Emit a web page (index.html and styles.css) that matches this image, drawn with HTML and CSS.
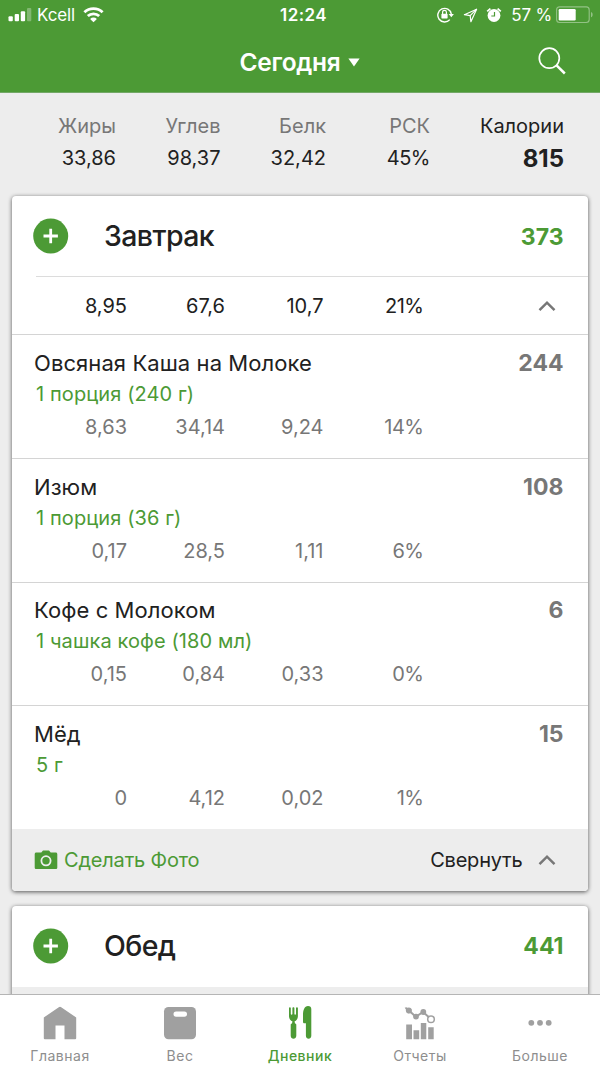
FILE: index.html
```html
<!DOCTYPE html>
<html lang="ru">
<head>
<meta charset="utf-8">
<meta name="viewport" content="width=device-width">
<title>Дневник</title>
<link rel="stylesheet" href="styles.css">
</head>
<body>
<div class="app">
  <header class="top">
    <div class="status">
      <div class="status-left">
        <svg width="24" height="16" viewBox="0 0 24 16" fill="#fff"><rect x="0.5" y="9.3" width="4.3" height="5" rx="1"/><rect x="6.7" y="7" width="4.3" height="7.3" rx="1"/><rect x="12.8" y="4.3" width="4.3" height="10" rx="1"/><rect x="19" y="1" width="4.3" height="13.3" rx="1" opacity=".3"/></svg>
        <span class="carrier">Kcell</span>
        <svg class="wifi" width="21" height="16" viewBox="0 0 21 16" fill="none" stroke="#fff" stroke-width="2.8"><path d="M1.4 5.3a13 13 0 0 1 18.2 0"/><path d="M4.8 9.1a8.2 8.2 0 0 1 11.4 0"/><path d="M10.5 15.2 7.1 11.9a4.9 4.9 0 0 1 6.8 0z" fill="#fff" stroke="none"/></svg>
      </div>
      <time class="clock">12:24</time>
      <div class="status-right">
        <svg width="18" height="16" viewBox="0 0 18 16"><path d="M12.8 12.600A6.800 6.800 0 1 1 14.300 7" fill="none" stroke="#fff" stroke-width="1.4"/><path d="M11.700 7h5.200l-2.600 3.300z" fill="#fff"/><rect x="4.400" y="6.800" width="6.200" height="4.600" rx=".6" fill="#fff"/><path d="M5.600 7V5.300a1.900 1.900 0 0 1 3.800 0V7" fill="none" stroke="#fff" stroke-width="1.200"/></svg>
        <svg class="arrow" width="15" height="15" viewBox="0 0 15 15" fill="none" stroke="#fff" stroke-width="1.200" stroke-linejoin="round"><path d="M13.600 1.200 1.400 6.700l5.800 1 .7 6z"/><path d="M7.200 7.700 13.600 1.200"/></svg>
        <svg class="alarm" width="16" height="16" viewBox="0 0 16 16"><circle cx="8" cy="8.500" r="6.400" fill="#fff"/><path d="M1.200 4.400 4.400 1.600M14.800 4.400l-3.200-2.800" stroke="#fff" stroke-width="1.800"/><path d="M8.500 5v4H5.300" fill="none" stroke="#4c9a35" stroke-width="1.200"/></svg>
        <span class="percent">57 %</span>
        <svg width="37" height="18" viewBox="0 0 37 18"><rect x=".6" y=".9" width="32.600" height="15.600" rx="3" fill="none" stroke="#fff" stroke-opacity=".4" stroke-width="1.100"/><rect x="2.700" y="3" width="17" height="11.400" rx="1.200" fill="#fff"/><path d="M35 6.100c2.200 1 2.200 4.200 0 5.200z" fill="#fff" opacity=".4"/></svg>
      </div>
    </div>
    <div class="titlebar">
      <div class="day">
        <h1>Сегодня</h1>
        <svg width="12" height="9" viewBox="0 0 12 9"><path d="M.4.5h11.200L6 8.500z" fill="#fff"/></svg>
      </div>
      <svg class="search" width="30" height="30" viewBox="0 0 30 30" fill="none" stroke="#fff"><circle cx="12.300" cy="12.200" r="10" stroke-width="1.700"/><path d="m19.300 19.200 8.500 8.300" stroke-width="2.500"/></svg>
    </div>
  </header>

  <section class="summary">
    <div><span class="label">Жиры</span><span>33,86</span></div>
    <div><span class="label">Углев</span><span>98,37</span></div>
    <div><span class="label">Белк</span><span>32,42</span></div>
    <div><span class="label">РСК</span><span class="share">45%</span></div>
    <div><span class="kcal-label">Калории</span><strong>815</strong></div>
  </section>

  <main class="meals">
    <section class="card">
      <div class="meal-head">
        <svg width="36" height="36" viewBox="0 0 36 36"><circle cx="17.700" cy="18" r="17.500" fill="#4c9a35"/><path d="M17.700 10.800v14.400M10.500 18h14.400" stroke="#fff" stroke-width="2.800"/></svg>
        <h2>Завтрак</h2><span class="meal-kcal">373</span>
      </div>
      <div class="totals nums"><span>8,95</span><span>67,6</span><span>10,7</span><span class="share">21%</span>
        <svg class="chev" width="18" height="12" viewBox="0 0 18 12"><path d="m1.500 10.200 7.500-7.500 7.500 7.500" fill="none" stroke="#777" stroke-width="2.500"/></svg>
      </div>
      <article class="item">
        <div class="item-head"><h3>Овсяная Каша на Молоке</h3><b>244</b></div>
        <p>1 порция (240 г)</p>
        <div class="nums"><span>8,63</span><span>34,14</span><span>9,24</span><span class="share">14%</span></div>
      </article>
      <article class="item">
        <div class="item-head"><h3>Изюм</h3><b>108</b></div>
        <p>1 порция (36 г)</p>
        <div class="nums"><span>0,17</span><span>28,5</span><span>1,11</span><span class="share">6%</span></div>
      </article>
      <article class="item">
        <div class="item-head"><h3>Кофе с Молоком</h3><b>6</b></div>
        <p>1 чашка кофе (180 мл)</p>
        <div class="nums"><span>0,15</span><span>0,84</span><span>0,33</span><span class="share">0%</span></div>
      </article>
      <article class="item">
        <div class="item-head"><h3>Мёд</h3><b>15</b></div>
        <p>5 г</p>
        <div class="nums"><span>0</span><span>4,12</span><span>0,02</span><span class="share">1%</span></div>
      </article>
      <footer class="card-foot">
        <svg class="camera" width="24" height="20" viewBox="0 0 24 20"><path d="M2.300 2.600h5L9 .6h6l1.700 2h5c.9 0 1.600.7 1.600 1.600v13.200c0 .9-.7 1.600-1.600 1.600H2.300c-.9 0-1.600-.7-1.600-1.600V4.200c0-.9.7-1.600 1.600-1.600z" fill="#4c9a35"/><circle cx="12" cy="10.800" r="4.600" fill="none" stroke="#eee" stroke-width="1.800"/></svg>
        <span class="photo">Сделать Фото</span>
        <span class="collapse">Свернуть</span>
        <svg width="18" height="12" viewBox="0 0 18 12"><path d="m1.500 10.200 7.500-7.500 7.500 7.500" fill="none" stroke="#777" stroke-width="2.500"/></svg>
      </footer>
    </section>

    <section class="card next">
      <div class="meal-head">
        <svg width="36" height="36" viewBox="0 0 36 36"><circle cx="17.700" cy="18" r="17.500" fill="#4c9a35"/><path d="M17.700 10.800v14.400M10.500 18h14.400" stroke="#fff" stroke-width="2.800"/></svg>
        <h2>Обед</h2><span class="meal-kcal">441</span>
      </div>
      <div class="strip"></div>
    </section>
  </main>

  <nav class="tabs">
    <a class="tab"><svg width="36" height="36" viewBox="0 0 36 36"><path d="M1.800 12.500 16.800 2.200q1.200-.8 2.400 0l15 10.300v20.700q0 1-1 1H22.500V20.500h-9v13.700H2.800q-1 0-1-1z" fill="#a0a0a0"/></svg><span>Главная</span></a>
    <a class="tab"><svg width="36" height="36" viewBox="0 0 36 36"><rect x="2" y="2" width="32" height="32.300" rx="4.500" fill="#a0a0a0"/><rect x="11.500" y="6.500" width="13.500" height="5.200" rx="2.600" fill="#fff"/></svg><span>Вес</span></a>
    <a class="tab active"><svg width="36" height="36" viewBox="0 0 36 36" fill="#4c9a35"><path d="M7 3c0-1 1.800-1 1.800 0v6c0 1 1.600 1 1.600 0V3c0-1 2-1 2 0v6c0 1 1.600 1 1.600 0V3c0-1 1.900-1 1.900 0v8c0 3-1.500 4.700-3.300 5.300l.3 2c1.300.5 1.400 1 1.400 2v10.500c0 3.800-5.600 3.800-5.600 0V20.300c0-1 .2-1.500 1.400-2l.3-2C8.600 15.700 7 14 7 11z"/><path d="M29.300 4v26.800c0 3.800-5.400 3.800-5.400 0V18.300h-1.400c-1 0-1.500-.5-1.500-1.500V10c0-5 1.500-9 5-9 2.200 0 3.300 1 3.300 3z"/></svg><span>Дневник</span></a>
    <a class="tab"><svg width="36" height="36" viewBox="0 0 36 36" fill="#a0a0a0"><path d="M4.200 19.500H10v14.700H4.200zM11.500 25.300h5.700v8.900h-5.700zM18.800 18h5.500v16.200h-5.500zM26.200 22.300h5.500v11.900h-5.500z"/><path d="m4 3 3.500 3 6.300 5.800L21 7l8 7" fill="none" stroke="#a0a0a0" stroke-width="2"/><path d="M2.700 2.300 9.500 4v4L6 8.500z"/><circle cx="6.800" cy="5.400" r="2.900"/><circle cx="14" cy="11.600" r="2.900"/><circle cx="21.300" cy="7" r="2.900"/><circle cx="29" cy="14.300" r="3.300" fill="#fff" stroke="#a0a0a0" stroke-width="1.500"/></svg><span>Отчеты</span></a>
    <a class="tab"><svg width="36" height="36" viewBox="0 0 36 36" fill="#a0a0a0"><circle cx="9.300" cy="17.800" r="2.900"/><circle cx="18" cy="17.800" r="2.900"/><circle cx="26.700" cy="17.800" r="2.900"/></svg><span>Больше</span></a>
  </nav>
</div>
</body>
</html>
```
FILE: styles.css
```css
* { box-sizing: border-box; }
body, h1, h2, h3, p { margin: 0; }
body {
  font-family: Inter, "Noto Sans", sans-serif;
  background: #ededed;
  color: #212121;
}
svg { display: block; flex: none; }

.app {
  width: 600px;
  height: 1066px;
  overflow: hidden;
  display: flex;
  flex-direction: column;
}

.top {
  height: 93px;
  flex: none;
  background: #4c9a35;
  border-bottom: 1px solid #73a867;
  color: #fff;
}
.status {
  height: 30px;
  display: grid;
  grid-template-columns: 1fr auto 1fr;
  align-items: center;
  padding: 0 7px 0 8px;
  font-size: 17px;
  line-height: 30px;
}
.status-left, .status-right { display: flex; align-items: center; }
.status-right { justify-content: flex-end; }
.carrier { margin-left: 5px; letter-spacing: -.1px; }
.wifi { margin-left: 8px; }
.clock { font-weight: 600; letter-spacing: .4px; padding-left: 6px; }
.arrow { margin-left: 8px; }
.alarm { margin-left: 8px; }
.percent { margin: 0 4px 0 9px; letter-spacing: -.2px; }

.titlebar {
  height: 63px;
  display: grid;
  grid-template-columns: 1fr auto 1fr;
  align-items: center;
  padding: 0 33px 0 32px;
}
.day { grid-column: 2; display: flex; align-items: center; gap: 7px; }
.day h1 {
  font-size: 24.500px;
  line-height: 64px;
  font-weight: 600;
  letter-spacing: -.25px;
}
.search { grid-column: 3; justify-self: end; margin-bottom: 2px; }

.summary {
  height: 103px;
  flex: none;
  display: grid;
  grid-template-columns: 116px 104.500px 105.500px 104px 134px;
  padding-top: 17px;
  font-size: 20px;
  line-height: 32px;
  text-align: right;
}
.summary div { display: flex; flex-direction: column; }
.label { color: #777; }
.share { letter-spacing: -.5px; }
.summary strong { font-size: 24px; line-height: 34px; }

.meals { flex: 1; min-height: 0; padding: 0 12px; }
.card {
  background: #fff;
  border-radius: 4px;
  box-shadow: 0 1px 4px rgba(0, 0, 0, .65);
  overflow: hidden;
}
.next { margin-top: 15px; }
.meal-head {
  height: 81px;
  display: flex;
  align-items: center;
  padding: 0 24.500px 1px 21px;
}
.meal-head h2 {
  margin-left: 35px;
  flex: 1;
  font-size: 28.500px;
  font-weight: 500;
  line-height: 40px;
  letter-spacing: -.6px;
}
.meal-kcal { color: #4c9a35; font-size: 23px; font-weight: 700; line-height: 30px; padding-top: 1px; }

.nums {
  display: grid;
  grid-template-columns: 115px 98px 98.500px 100px 1fr;
  align-items: center;
  text-align: right;
  font-size: 20px;
  line-height: 30px;
}
.totals { height: 58px; position: relative; border-bottom: 1px solid #d4d4d4; }
.totals::before { content: ""; position: absolute; top: -1px; left: 24px; right: 0; height: 1px; background: #dcdcdc; }
.chev { justify-self: end; margin-right: 32.500px; }

.item { height: 123.400px; padding-top: 13px; }
.item:nth-last-of-type(1) { height: 123.800px; }
.item + .item { border-top: 1px solid #d4d4d4; padding-top: 12.500px; }
.item-head { display: flex; justify-content: space-between; padding: 0 24.500px 0 22px; line-height: 30px; }
.item-head h3 { font-size: 22px; font-weight: 400; letter-spacing: .08px; }
.item-head b { font-size: 23px; font-weight: 700; color: #777; }
.item p { padding-left: 24px; font-size: 20px; line-height: 32px; letter-spacing: .1px; color: #4c9a35; }
.item .nums { color: #777; line-height: 34px; }

.card-foot {
  height: 62px;
  display: flex;
  align-items: center;
  padding: 0 32.500px 0 22px;
  background: #ededed;
  font-size: 20px;
  line-height: 30px;
}
.photo { margin-left: 6px; flex: 1; color: #4c9a35; letter-spacing: -.18px; }
.collapse { margin-right: 15px; letter-spacing: -.2px; }
.strip { height: 20px; background: #ededed; }

.tabs {
  position: relative;
  height: 72px;
  flex: none;
  display: grid;
  grid-template-columns: repeat(5, 120px);
  border-top: 1px solid #b5b5b5;
  background: #fff;
}
.tab {
  display: flex;
  flex-direction: column;
  align-items: center;
  padding-top: 10px;
  color: #8e8e8e;
  font-size: 14px;
  line-height: 20px;
  letter-spacing: .5px;
}
.tab span { margin-top: 5px; }
.active { color: #4c9a35; font-weight: 500; }
```
